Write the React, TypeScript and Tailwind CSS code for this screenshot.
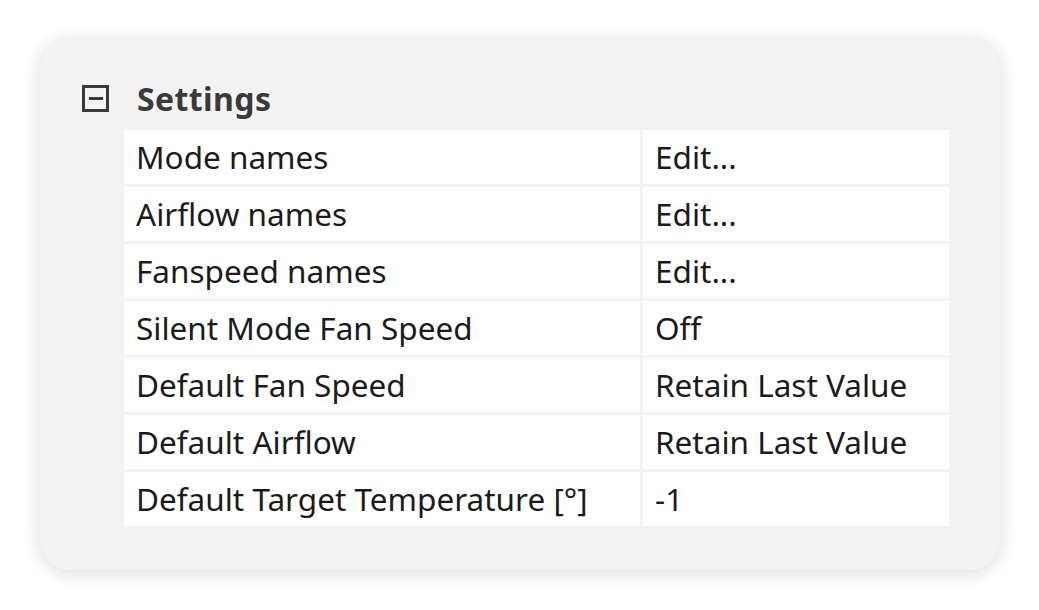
import React from "react";

const rows: [string, string][] = [
  ["Mode names", "Edit..."],
  ["Airflow names", "Edit..."],
  ["Fanspeed names", "Edit..."],
  ["Silent Mode Fan Speed", "Off"],
  ["Default Fan Speed", "Retain Last Value"],
  ["Default Airflow", "Retain Last Value"],
  ["Default Target Temperature [°]", "-1"],
];

export default function App() {
  return (
    <div className="w-[1039px] h-[610px] bg-white pt-[40px] pl-[40px]" style={{ fontFamily: '"Noto Sans", "Open Sans", sans-serif' }}>
      <div className="w-[960px] h-[530px] rounded-[30px] bg-[#f3f3f3] shadow-[0_2px_18px_rgba(0,0,0,0.16)] pl-[42px] pt-[45px]">
        <div className="flex items-center h-[27px]">
          <div className="w-[27px] h-[27px] border-[3px] border-[#3a3a3a] flex items-center justify-center">
            <div className="w-[14px] h-[3px] bg-[#3a3a3a]" />
          </div>
          <span className="ml-[28px] text-[32px] font-bold text-[#3a3a3a] leading-none tracking-[0.4px]">Settings</span>
        </div>
        <div className="ml-[42px] mt-[18px] grid grid-cols-[516px_306px] auto-rows-[54px] gap-[3px] text-[31.5px] text-[#1b1b1b]">
          {rows.map(([k, v]) => (
            <React.Fragment key={k}>
              <div className="bg-white flex items-center pl-[12px] whitespace-nowrap">{k}</div>
              <div className="bg-white flex items-center pl-[12px] whitespace-nowrap">{v}</div>
            </React.Fragment>
          ))}
        </div>
      </div>
    </div>
  );
}
